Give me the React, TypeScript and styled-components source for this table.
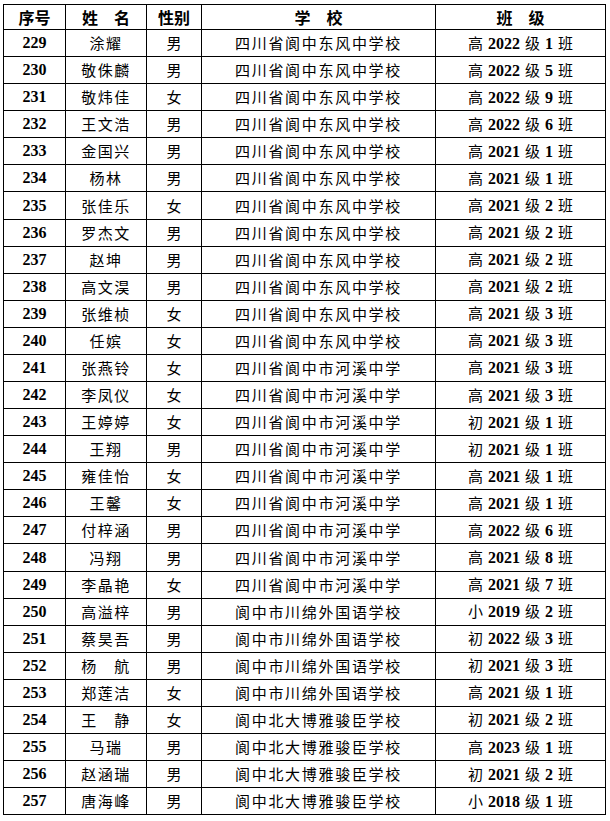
import React from 'react';
import styled, { createGlobalStyle } from 'styled-components';

type Student = {
  no: number;
  name: string;
  sex: string;
  school: string;
  level: string;
  year: string;
  cls: string;
};

const GlobalStyle = createGlobalStyle`
  html, body {
    margin: 0;
    padding: 0;
    background: #ffffff;
  }
  body {
    font-family: "Noto Sans CJK SC", sans-serif;
    color: #000;
  }
`;

const Page = styled.div`
  width: 610px;
  height: 821px;
  padding: 4px 0 0 3px;
  box-sizing: border-box;
  background: #fff;
`;

const Table = styled.table`
  border-collapse: collapse;
  table-layout: fixed;
  width: 602px;
  border: 1px solid #000;

  td,
  th {
    border: 1px solid #000;
    padding: 0;
    text-align: center;
    vertical-align: middle;
    white-space: nowrap;
    overflow: hidden;
  }
`;

const HeadRow = styled.tr`
  height: 25px;
`;

const Row = styled.tr`
  height: 27.08px;
`;

const HeadCell = styled.th`
  font-family: "Noto Sans CJK SC", sans-serif;
  font-weight: 700;
  font-size: 16px;
  line-height: 20px;
  color: #000;
`;

const NumCell = styled.td`
  font-family: "Liberation Serif", serif;
  font-weight: 700;
  font-size: 16px;
  line-height: 20px;
`;

const TextCell = styled.td<{ $spacing?: number }>`
  font-family: "Noto Sans CJK SC", sans-serif;
  font-size: 15px;
  line-height: 20px;
  letter-spacing: ${p => p.$spacing ?? 0}px;
`;

const Digits = styled.span`
  font-family: "Liberation Serif", serif;
  font-weight: 700;
  font-size: 16px;
  margin: 0 5px;
`;

const dongfeng = '四川省阆中东风中学校';
const hexi = '四川省阆中市河溪中学';
const chuanmian = '阆中市川绵外国语学校';
const beida = '阆中北大博雅骏臣学校';

const raw: [string, string, string, string, string, string][] = [
  ['涂耀', '男', dongfeng, '高', '2022', '1'],
  ['敬侏麟', '男', dongfeng, '高', '2022', '5'],
  ['敬炜佳', '女', dongfeng, '高', '2022', '9'],
  ['王文浩', '男', dongfeng, '高', '2022', '6'],
  ['金国兴', '男', dongfeng, '高', '2021', '1'],
  ['杨林', '男', dongfeng, '高', '2021', '1'],
  ['张佳乐', '女', dongfeng, '高', '2021', '2'],
  ['罗杰文', '男', dongfeng, '高', '2021', '2'],
  ['赵坤', '男', dongfeng, '高', '2021', '2'],
  ['高文淏', '男', dongfeng, '高', '2021', '2'],
  ['张维桢', '女', dongfeng, '高', '2021', '3'],
  ['任嫔', '女', dongfeng, '高', '2021', '3'],
  ['张燕铃', '女', hexi, '高', '2021', '3'],
  ['李凤仪', '女', hexi, '高', '2021', '3'],
  ['王婷婷', '女', hexi, '初', '2021', '1'],
  ['王翔', '男', hexi, '初', '2021', '1'],
  ['雍佳怡', '女', hexi, '高', '2021', '1'],
  ['王馨', '女', hexi, '高', '2021', '1'],
  ['付梓涵', '男', hexi, '高', '2022', '6'],
  ['冯翔', '男', hexi, '高', '2021', '8'],
  ['李晶艳', '女', hexi, '高', '2021', '7'],
  ['高溢梓', '男', chuanmian, '小', '2019', '2'],
  ['蔡昊吾', '男', chuanmian, '初', '2022', '3'],
  ['杨　航', '男', chuanmian, '初', '2021', '3'],
  ['郑莲洁', '女', chuanmian, '高', '2021', '1'],
  ['王　静', '女', beida, '初', '2021', '2'],
  ['马瑞', '男', beida, '高', '2023', '1'],
  ['赵涵瑞', '男', beida, '初', '2021', '2'],
  ['唐海峰', '男', beida, '小', '2018', '1'],
];

const students: Student[] = raw.map((r, i) => ({
  no: 229 + i,
  name: r[0],
  sex: r[1],
  school: r[2],
  level: r[3],
  year: r[4],
  cls: r[5],
}));

const App: React.FC = () => {
  return (
    <Page>
      <GlobalStyle />
      <Table>
        <colgroup>
          <col style={{ width: 62 }} />
          <col style={{ width: 81 }} />
          <col style={{ width: 55 }} />
          <col style={{ width: 234 }} />
          <col style={{ width: 170 }} />
        </colgroup>
        <thead>
          <HeadRow>
            <HeadCell>序号</HeadCell>
            <HeadCell>姓　名</HeadCell>
            <HeadCell>性别</HeadCell>
            <HeadCell>学　校</HeadCell>
            <HeadCell>班　级</HeadCell>
          </HeadRow>
        </thead>
        <tbody>
          {students.map(s => (
            <Row key={s.no}>
              <NumCell>{s.no}</NumCell>
              <TextCell $spacing={1.5}>{s.name}</TextCell>
              <TextCell>{s.sex}</TextCell>
              <TextCell $spacing={1.7}>{s.school}</TextCell>
              <TextCell>
                {s.level}<Digits>{s.year}</Digits>级<Digits>{s.cls}</Digits>班
              </TextCell>
            </Row>
          ))}
        </tbody>
      </Table>
    </Page>
  );
};

export default App;
